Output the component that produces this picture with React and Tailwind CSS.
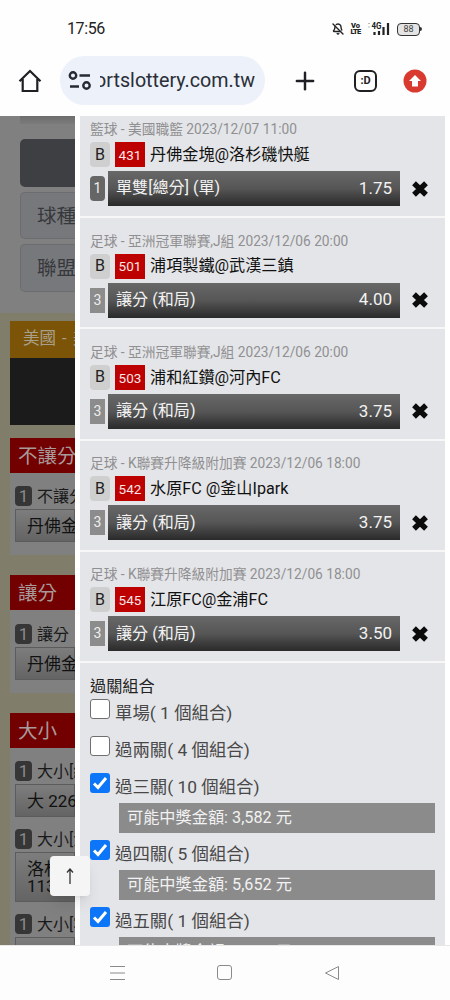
import { BellOff, Plus } from "lucide-react";

const bets = [
  { league: "籃球 - 美國職籃 2023/12/07 11:00", no: "431", teams: "丹佛金塊@洛杉磯快艇", min: "1", pick: "單雙[總分] (單)", odds: "1.75" },
  { league: "足球 - 亞洲冠軍聯賽,J組 2023/12/06 20:00", no: "501", teams: "浦項製鐵@武漢三鎮", min: "3", pick: "讓分 (和局)", odds: "4.00" },
  { league: "足球 - 亞洲冠軍聯賽,J組 2023/12/06 20:00", no: "503", teams: "浦和紅鑽@河內FC", min: "3", pick: "讓分 (和局)", odds: "3.75" },
  { league: "足球 - K聯賽升降級附加賽 2023/12/06 18:00", no: "542", teams: "水原FC @釜山Ipark", min: "3", pick: "讓分 (和局)", odds: "3.75" },
  { league: "足球 - K聯賽升降級附加賽 2023/12/06 18:00", no: "545", teams: "江原FC@金浦FC", min: "3", pick: "讓分 (和局)", odds: "3.50" },
];

const combos = [
  { label: "單場( 1 個組合)" },
  { label: "過兩關( 4 個組合)" },
  { label: "過三關( 10 個組合)", prize: "3,582" },
  { label: "過四關( 5 個組合)", prize: "5,652" },
  { label: "過五關( 1 個組合)", prize: "3,375" },
];

function StatusBar() {
  return (
    <div className="flex h-[56px] shrink-0 items-center justify-between pl-[67px] pr-[28px] pt-[2px] text-[#222]">
      <span className="text-[16px] tracking-[-0.4px]">17:56</span>
      <div className="flex items-center">
        <BellOff className="mr-[7px] size-[12px]" strokeWidth={2.8} />
        <div className="mr-[7px] flex w-[9px] flex-col items-center text-[7.5px] font-black leading-[6.5px]">
          <span>Vo</span>
          <span className="tracking-[-0.8px]">LTE</span>
        </div>
        <svg className="mr-[7px]" width="23" height="14" viewBox="0 0 23 14">
          <path d="M1 1.5h2M1 5h2" stroke="#bbb" />
          <text x="4.5" y="7" fontSize="8.5" fontWeight="700" fill="#222" textLength="10" lengthAdjust="spacingAndGlyphs">4G</text>
          <path d="M7.5 10v3M12 9v4M16.5 5v8M21 1v12" stroke="#222" strokeWidth="2.2" />
        </svg>
        <div className="flex h-[13px] w-[23px] items-center justify-center rounded-[4px] border-[1.5px] border-[#333] bg-[#e4e4e4] text-[9px] leading-none text-[#444]">
          88
        </div>
        <div className="h-[4px] w-[2px] rounded-r bg-[#333]" />
      </div>
    </div>
  );
}

function AddressBar() {
  return (
    <div className="flex h-[60px] shrink-0 items-start">
      <svg className="ml-[18px] mt-[13px]" width="24" height="24" viewBox="0 0 24 24" fill="none" stroke="#1f2023" strokeWidth="2.2">
        <path d="M1.5 12.2 12 2l10.5 10.2M4.7 10v12h14.6V10" />
      </svg>
      <div className="ml-[18px] flex h-[49px] w-[205px] items-center rounded-full bg-[#ecf1fa] pl-[8px]">
        <svg width="24" height="20" viewBox="0 0 24 20" fill="none" stroke="#252a33" strokeWidth="2.4">
          <circle cx="5" cy="4.5" r="3.2" />
          <path d="M11.5 4.5H22M2 15.5h9" />
          <circle cx="18.5" cy="14.5" r="3.2" />
        </svg>
        <div className="ml-[8px] flex w-[155px] justify-end overflow-hidden whitespace-nowrap pt-[1px] text-[19.7px] text-[#2a2e36]">
          <span>sportslottery.com.tw</span>
        </div>
      </div>
      <Plus className="ml-[26px] mt-[11px] size-[28px] text-[#1f2023]" strokeWidth={2.1} />
      <div className="ml-[35px] mt-[14px] flex h-[22px] w-[23px] items-center justify-center rounded-[6px] border-2 border-[#1f2023] text-[11px] font-bold text-[#1f2023]">
        :D
      </div>
      <svg className="ml-[26px] mt-[13px]" width="24" height="24" viewBox="0 0 24 24">
        <circle cx="12" cy="12" r="11.5" fill="#d93a30" />
        <path d="M12 6 18 12h-3v5.500H9V12H6z" fill="#fff" />
      </svg>
    </div>
  );
}

function MinBadge({ children }) {
  return (
    <span className="flex h-[20px] w-[17px] shrink-0 items-center justify-center rounded-[4px] bg-[#363636] text-[17px] text-[#8a8a8a]">
      {children}
    </span>
  );
}

function Market({ name, option, tall }) {
  return (
    <div className="pl-[5px]">
      <div className="flex h-[23px] items-start gap-[5px] text-[16px] leading-[22px] text-[#191919]">
        <MinBadge>1</MinBadge>
        <span>{name}</span>
      </div>
      <div
        className={
          "flex items-center whitespace-pre border border-[#5c5c5c] bg-linear-to-b from-[#7d7d7d] to-[#646464] pl-[11px] pt-[1px] text-[17px] leading-[17px] text-[#111] " +
          (tall ? "h-[50px]" : "h-[33px]")
        }
      >
        {option}
      </div>
    </div>
  );
}

function SectionTitle({ children }) {
  return <div className="flex h-[35px] items-center bg-[#730000] pl-[8px] pt-[2px] text-[19.5px] text-[#a89a9a]">{children}</div>;
}

// game list dimmed by the bet slip backdrop
function GameList() {
  return (
    <div className="h-full w-[75px] shrink-0 overflow-hidden whitespace-nowrap bg-[#808080]">
      <div className="flex h-[197px] flex-col pl-[20px]">
        <div className="mb-[15px] h-[8px] bg-linear-to-b from-[#6d6d6d] to-[#7b7b7b]" />
        <div className="h-[48px] shrink-0 rounded-l-[5px] bg-[#3e3f43]" />
        <div className="mt-[5px] flex h-[47px] shrink-0 items-center rounded-l-[5px] border border-r-0 border-[#6b6d70] bg-[#76787b] pl-[16px] pt-[2px] text-[19.5px] text-[#36383c]">
          球種
        </div>
        <div className="mt-[5px] flex h-[48px] shrink-0 items-center rounded-l-[5px] border border-r-0 border-[#6b6d70] bg-[#76787b] pl-[16px] pt-[1px] text-[19.5px] text-[#36383c]">
          聯盟
        </div>
      </div>
      <div className="bg-[#807e6a] pl-[10px] pt-[8px]">
        <div className="flex h-[37px] items-center bg-[#7b5407] pl-[13px] text-[16.5px] text-[#a9a08c] [word-spacing:2px]">美國 - 美國職籃</div>
        <div className="h-[67px] bg-[#1b1b1b]" />
        <div className="mt-[13px]">
          <SectionTitle>不讓分</SectionTitle>
          <div className="h-[82px] bg-[#808080] pt-[13px]">
            <Market name="不讓分" option="丹佛金塊" />
          </div>
        </div>
        <div className="mt-[20px]">
          <SectionTitle>讓分</SectionTitle>
          <div className="h-[83px] bg-[#808080] pt-[14px]">
            <Market name="讓分" option="丹佛金塊" />
          </div>
        </div>
        <div className="mt-[20px]">
          <SectionTitle>大小</SectionTitle>
          <div className="flex flex-col gap-[12px] bg-[#808080] pt-[13px]">
            <Market name="大小[總分]" option="大 226.5" />
            <Market name="大小[洛杉磯]" option={"洛杉磯\n113.5"} tall />
            <Market name="大小[客隊]" option="丹佛金塊" />
          </div>
        </div>
      </div>
    </div>
  );
}

function BetItem({ bet, first }) {
  return (
    <div
      className={
        "flex shrink-0 flex-col border-b-2 border-[#f7f7f8] pl-[10px] " +
        (first ? "h-[102px] pt-[3px]" : "h-[111.3px] pt-[12.6px]")
      }
    >
      <div className="h-[20px] text-[13.72px] leading-[20px] text-[#909092]">{bet.league}</div>
      <div className="mt-[3px] flex h-[25px] items-center">
        <span className="flex h-[25px] w-[20px] items-center justify-center rounded-[4px] bg-[#cfcfcf] text-[16px] text-[#222]">B</span>
        <span className="ml-[5px] flex h-[25px] w-[30px] items-center justify-center bg-[#bd0000] pt-[1px] text-[13.5px] text-[#f6e6e6]">
          {bet.no}
        </span>
        <span className="ml-[5px] pt-[1px] text-[16.15px] text-[#111]">{bet.teams}</span>
      </div>
      <div className="mt-[4px] flex h-[35px] items-center">
        <span
          className={
            "flex h-[25px] w-[15px] items-center justify-center text-[14px] text-[#eee] " +
            (bet.min === "1" ? "rounded-[4px] bg-[#666]" : "bg-[#8c8c8c]")
          }
        >
          {bet.min}
        </span>
        <div className="ml-[3px] flex h-[35px] w-[292px] items-center justify-between bg-linear-to-b from-[#686868] via-[#565656] to-[#2a2a2a] pl-[8px] pr-[8px] text-[16.1px] text-[#f2f2f2]">
          <span>{bet.pick}</span>
          <span className="text-[17px]">{bet.odds}</span>
        </div>
        <svg className="ml-[12px]" width="16" height="16" viewBox="0 0 16 16" stroke="#0b0b0b" strokeWidth="5.4" strokeLinejoin="round">
          <path d="M2 2.200l12 11.600M14 2.200 2 13.800" />
        </svg>
      </div>
    </div>
  );
}

function Checkbox({ checked }) {
  if (!checked) {
    return <span className="size-[20px] rounded-[3px] border-[1.5px] border-[#707070] bg-white" />;
  }
  return (
    <span className="flex size-[20px] items-center justify-center rounded-[3px] bg-[#0c75f8]">
      <svg width="16" height="16" viewBox="0 0 16 16" fill="none" stroke="#fff" strokeWidth="3">
        <path d="M2 8.500 6 12.500 14 3" />
      </svg>
    </span>
  );
}

function BetSlip() {
  return (
    <div className="h-full flex-1 overflow-hidden border-x-[5px] border-white bg-[#e4e5e8]">
      {bets.map((bet, i) => (
        <BetItem key={bet.no} bet={bet} first={i === 0} />
      ))}
      <div className="pl-[10px] pr-[10px] pt-[11.500px]">
        <div className="h-[24px] text-[16.2px] leading-[24px] text-[#222]">過關組合</div>
        {combos.map((c) => (
          <div key={c.label} className={c.prize ? "h-[67.2px]" : "h-[37px]"}>
            <div className="flex h-[30px] items-start">
              <Checkbox checked={!!c.prize} />
              <span className="ml-[5px] pt-[2px] text-[17.4px] leading-[24px] text-[#484848]">{c.label}</span>
            </div>
            {c.prize && (
              <div className="ml-[29px] flex h-[30px] items-center bg-[#8b8b8b] pl-[8px] text-[16.2px] text-[#f2f2f2]">
                可能中獎金額: {c.prize} 元
              </div>
            )}
          </div>
        ))}
      </div>
    </div>
  );
}

function NavBar() {
  return (
    <div className="flex h-[55px] shrink-0 items-center border-t border-[#e8e8e8] bg-[#fdfdfd] pb-[1px]">
      <svg className="ml-[109px]" width="17" height="16" viewBox="0 0 17 16" stroke="#8a8a8a">
        <path d="M1 1.500h15M1 8h15M1 14.500h15" />
      </svg>
      <div className="ml-[91px] size-[15px] rounded-[3px] border border-[#8a8a8a]" />
      <svg className="ml-[92px]" width="16" height="16" viewBox="0 0 16 16" fill="none" stroke="#8a8a8a" strokeLinejoin="round">
        <path d="M14.500 1.500v13L1.500 8z" />
      </svg>
    </div>
  );
}

export default function App() {
  return (
    <div className="flex h-[1000px] w-[450px] flex-col overflow-hidden bg-[#fefefe] font-[Roboto,'Noto_Sans_CJK_TC',sans-serif]">
      <StatusBar />
      <AddressBar />
      <div className="relative flex h-[829px] shrink-0 overflow-hidden">
        <GameList />
        <BetSlip />
        <button className="absolute bottom-[49px] left-[50px] flex size-[40px] items-center justify-center rounded-[4px] bg-[#f5f5f5] shadow-lg">
          <svg width="10" height="18" viewBox="0 0 10 18" fill="none" stroke="#333" strokeWidth="1.300">
            <path d="M5 17V2M2 5.500 5 2l3 3.500" />
          </svg>
        </button>
      </div>
      <NavBar />
    </div>
  );
}
